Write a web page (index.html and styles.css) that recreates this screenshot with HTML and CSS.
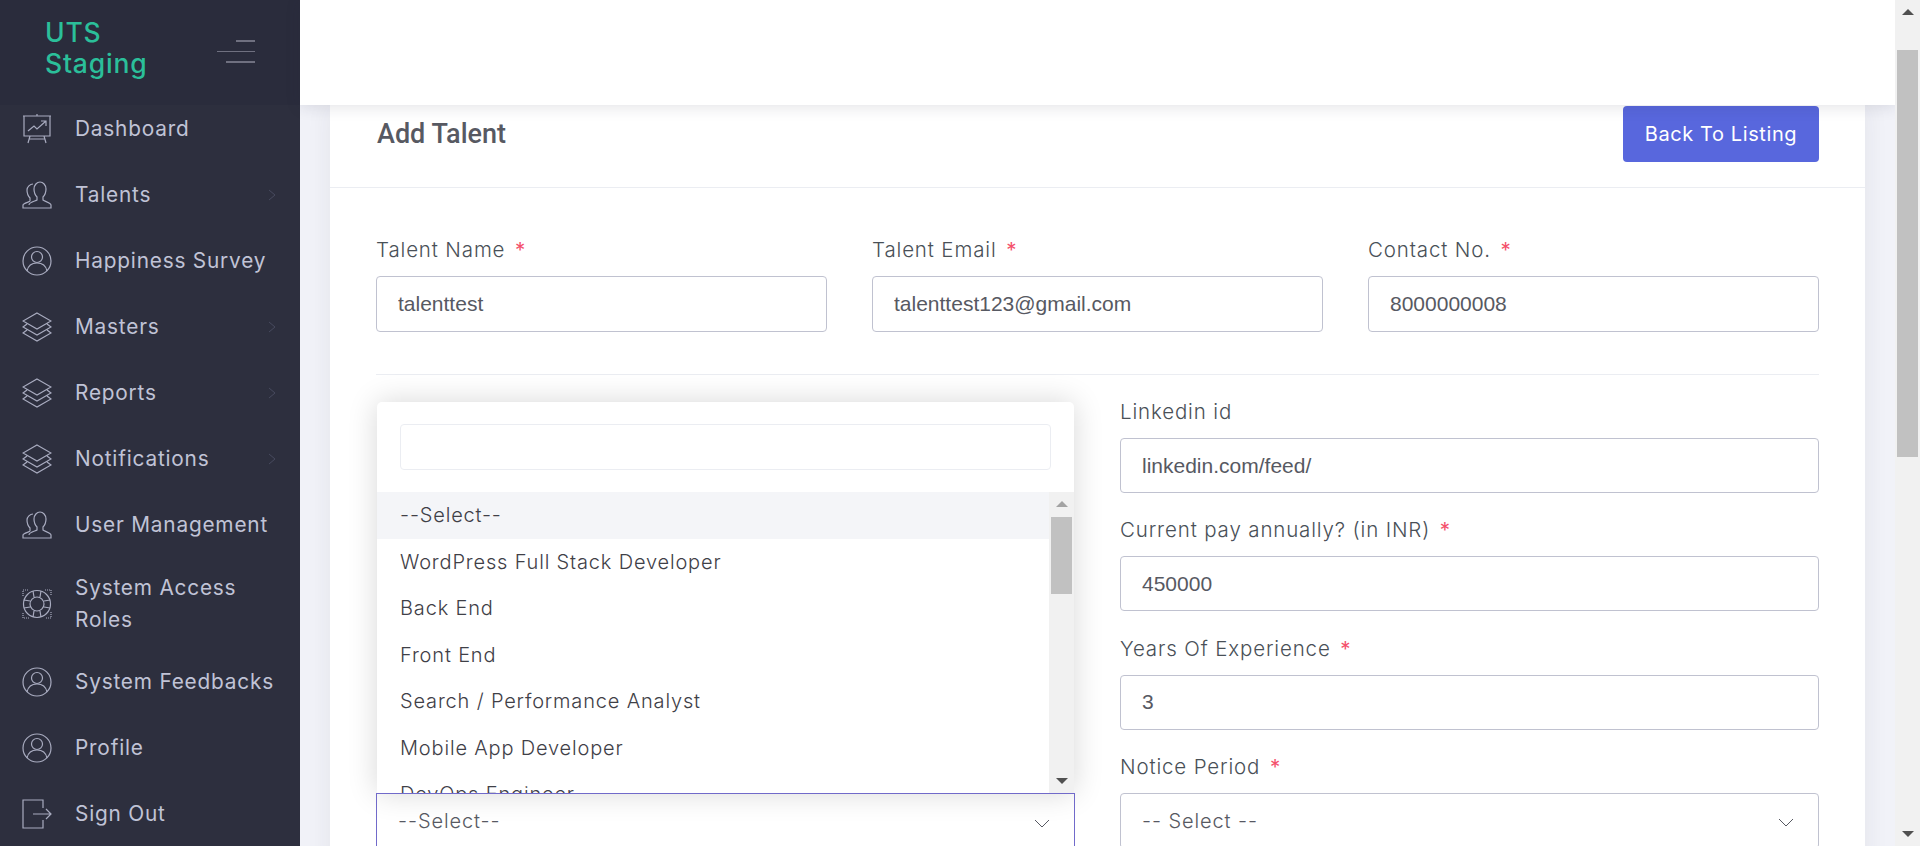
FILE: index.html
```html
<!DOCTYPE html>
<html>
  <head>
    <title>Add Talent</title>
    <link rel="stylesheet" href="styles.css">
  </head>
  <body>
    <div class="app">
      <aside class="sidebar">
        <div class="brand">
          <div class="brand-name">UTS<br>Staging</div>
          <svg class="burger" width="40" height="26" viewBox="0 0 40 26"><path d="M20 2h19M10 23h29" stroke="#6f7080" stroke-width="2" fill="none"/><path d="M1 12.500h38" stroke="#6f7080" stroke-width="1" fill="none"/></svg>
        </div>
        <ul class="menu">
          <li class="menu-item">
            <svg class="mi" viewBox="0 0 30 30"><path d="M1 2h28M2 2v20h26V2M15 2V0M8 22l-2 7M22 22l2 7M7 25h16M6 17l6-5 3 3 9-8M19 7h5v5"/></svg>
            <span>Dashboard</span>
          </li>
          <li class="menu-item">
            <svg class="mi" viewBox="0 0 30 30"><path d="M1 28h28v-3c0-2-7-4-8-5v-3c2-2 3-4 3-8 0-4-3-7-6-7s-6 3-6 7c0 4 1 6 3 8v3c-1 1-8 2-8 5M4 28h-3v-3c0-2 7-3 7-4v-3c-2-2-3-4-3-8 0-3 3-6 6-6"/></svg>
            <span>Talents</span>
            <svg class="caret" width="8" height="12" viewBox="0 0 8 12"><path d="M1 1l6 5-6 5"/></svg>
          </li>
          <li class="menu-item">
            <svg class="mi" viewBox="0 0 30 30"><circle cx="15" cy="15" r="14"/><circle cx="15" cy="11" r="5.500"/><path d="M5 25c1-5 5-8 10-8s9 3 10 8"/></svg>
            <span>Happiness Survey</span>
          </li>
          <li class="menu-item">
            <svg class="mi" viewBox="0 0 30 30"><path d="M15 1l14 8-14 8L1 9zM5 12l-4 3 14 8 14-8-4-3M5 18l-4 3 14 8 14-8-4-3"/></svg>
            <span>Masters</span>
            <svg class="caret" width="8" height="12" viewBox="0 0 8 12"><path d="M1 1l6 5-6 5"/></svg>
          </li>
          <li class="menu-item">
            <svg class="mi" viewBox="0 0 30 30"><path d="M15 1l14 8-14 8L1 9zM5 12l-4 3 14 8 14-8-4-3M5 18l-4 3 14 8 14-8-4-3"/></svg>
            <span>Reports</span>
            <svg class="caret" width="8" height="12" viewBox="0 0 8 12"><path d="M1 1l6 5-6 5"/></svg>
          </li>
          <li class="menu-item">
            <svg class="mi" viewBox="0 0 30 30"><path d="M15 1l14 8-14 8L1 9zM5 12l-4 3 14 8 14-8-4-3M5 18l-4 3 14 8 14-8-4-3"/></svg>
            <span>Notifications</span>
            <svg class="caret" width="8" height="12" viewBox="0 0 8 12"><path d="M1 1l6 5-6 5"/></svg>
          </li>
          <li class="menu-item">
            <svg class="mi" viewBox="0 0 30 30"><path d="M1 28h28v-3c0-2-7-4-8-5v-3c2-2 3-4 3-8 0-4-3-7-6-7s-6 3-6 7c0 4 1 6 3 8v3c-1 1-8 2-8 5M4 28h-3v-3c0-2 7-3 7-4v-3c-2-2-3-4-3-8 0-3 3-6 6-6"/></svg>
            <span>User Management</span>
          </li>
          <li class="menu-item two-line">
            <svg class="mi" viewBox="0 0 30 30"><circle cx="15" cy="15" r="13.500"/><circle cx="15" cy="15" r="7"/><path d="M11 2l1 6M19 2l-1 6M11 28l1-6M19 28l-1-6M2 11l6 1M2 19l6-1M28 11l-6 1M28 19l-6-1"/><path class="corners" d="M1 7V1h6M23 1h6v6M29 23v6h-6M7 29H1v-6"/></svg>
            <span>System Access Roles</span>
          </li>
          <li class="menu-item">
            <svg class="mi" viewBox="0 0 30 30"><circle cx="15" cy="15" r="14"/><circle cx="15" cy="11" r="5.500"/><path d="M5 25c1-5 5-8 10-8s9 3 10 8"/></svg>
            <span>System Feedbacks</span>
          </li>
          <li class="menu-item">
            <svg class="mi" viewBox="0 0 30 30"><circle cx="15" cy="15" r="14"/><circle cx="15" cy="11" r="5.500"/><path d="M5 25c1-5 5-8 10-8s9 3 10 8"/></svg>
            <span>Profile</span>
          </li>
          <li class="menu-item">
            <svg class="mi" viewBox="0 0 30 30"><path d="M21 9V1H1v28h20v-8M11 15h18M24 10l5 5-5 5"/></svg>
            <span>Sign Out</span>
          </li>
        </ul>
      </aside>

      <div class="content">
        <header class="topbar"></header>
        <main class="main">
          <section class="card">
            <div class="card-head">
              <h1>Add Talent</h1>
              <a class="btn" href="#">Back To Listing</a>
            </div>
            <div class="card-body">
              <div class="row-3">
                <div class="field">
                  <label>Talent Name <b>*</b></label>
                  <input class="input" type="text" value="talenttest">
                </div>
                <div class="field">
                  <label>Talent Email <b>*</b></label>
                  <input class="input" type="text" value="talenttest123@gmail.com">
                </div>
                <div class="field">
                  <label>Contact No. <b>*</b></label>
                  <input class="input" type="text" value="8000000008">
                </div>
              </div>
              <hr class="divider">
              <div class="row-2">
                <div class="left-col">
                  <div class="dropdown">
                    <div class="dd-search"><input type="text"></div>
                    <div class="dd-list">
                      <ul class="dd-options">
                        <li class="active">--Select--</li>
                        <li>WordPress Full Stack Developer</li>
                        <li>Back End</li>
                        <li>Front End</li>
                        <li>Search / Performance Analyst</li>
                        <li>Mobile App Developer</li>
                        <li>DevOps Engineer</li>
                      </ul>
                      <div class="dd-scroll">
                        <span class="arrow-up"></span>
                        <span class="dd-thumb"></span>
                        <span class="arrow-down"></span>
                      </div>
                    </div>
                  </div>
                  <div class="select open">
                    --Select--
                    <svg width="16" height="10" viewBox="0 0 16 10"><path d="M1 1l7 7 7-7"/></svg>
                  </div>
                </div>
                <div class="right-col">
                  <div class="field">
                    <label>Linkedin id</label>
                    <input class="input" type="text" value="linkedin.com/feed/">
                  </div>
                  <div class="field">
                    <label>Current pay annually? (in INR) <b>*</b></label>
                    <input class="input" type="text" value="450000">
                  </div>
                  <div class="field">
                    <label>Years Of Experience <b>*</b></label>
                    <input class="input" type="text" value="3">
                  </div>
                  <div class="field">
                    <label>Notice Period <b>*</b></label>
                    <div class="select">
                      -- Select --
                      <svg width="16" height="10" viewBox="0 0 16 10"><path d="M1 1l7 7 7-7"/></svg>
                    </div>
                  </div>
                </div>
              </div>
            </div>
          </section>
        </main>
      </div>

      <div class="page-scroll">
        <span class="arrow-up"></span>
        <span class="page-thumb"></span>
        <span class="arrow-down"></span>
      </div>
    </div>
  </body>
</html>
```

FILE: styles.css
```css
/* base */
html, body {
    height: 100%;
}

body {
    margin: 0;
    overflow: hidden;
    font-family: "Inter", "Liberation Sans", sans-serif;
    color: #495057;
    background-color: #f1f2f8;
}

.app {
    display: flex;
    height: 846px;
    overflow: hidden;
}

/* sidebar */
.sidebar {
    width: 300px;
    flex: none;
    background-color: #2d2f3e;
    overflow: hidden;
}

.brand {
    height: 105px;
    box-sizing: border-box;
    padding: 0 44px 0 45px;
    display: flex;
    align-items: center;
    justify-content: space-between;
    background-color: #2a2c3c;
}

.brand-name {
    color: #2bbf9a;
    font-size: 26.500px;
    line-height: 31px;
    font-weight: 500;
    letter-spacing: 0.8px;
    margin-top: -10px;
}

.burger {
    margin-top: -1px;
}

.menu {
    list-style: none;
    margin: -9px 0 0;
    padding: 0;
}

.menu-item {
    display: flex;
    align-items: center;
    min-height: 66px;
    box-sizing: border-box;
    padding: 13px 20px 13px 22px;
    color: #c0c3d6;
    font-size: 20.800px;
    line-height: 32px;
    letter-spacing: 0.8px;
    position: relative;
}

.menu-item.two-line {
    min-height: 91px;
}

.menu-item span {
    flex: 1;
}

.mi {
    width: 30px;
    height: 30px;
    flex: none;
    margin-right: 23px;
    fill: none;
    stroke: #a9acc0;
    stroke-width: 1.200;
}

.mi .corners {
    stroke-dasharray: 1 1;
}

.caret {
    position: absolute;
    right: 24px;
    top: 27px;
    fill: none;
    stroke: #474a5e;
}

/* top area */
.content {
    flex: 1;
    min-width: 0;
    display: flex;
    flex-direction: column;
}

.topbar {
    height: 105px;
    flex: none;
    background-color: #fff;
    box-shadow: 0 2px 14px rgba(40, 42, 60, 0.13);
    position: relative;
    z-index: 2;
}

.main {
    flex: 1;
    padding: 0 30px;
}

.card {
    background-color: #fff;
    box-shadow: 0 0 24px rgba(40, 42, 60, 0.07);
}

.card-head {
    height: 83px;
    box-sizing: border-box;
    padding: 1px 46px 0;
    display: flex;
    align-items: flex-start;
    justify-content: space-between;
    border-bottom: 1px solid #ebedf2;
}

.card-head h1 {
    margin: 13px 0 0;
    padding-left: 1px;
    font-size: 27px;
    line-height: 30px;
    font-weight: 500;
    font-family: "Roboto", sans-serif;
    color: #575962;
}

.btn {
    width: 196px;
    height: 56px;
    display: flex;
    align-items: center;
    justify-content: center;
    background-color: #5867dd;
    border-radius: 4px;
    color: #fff;
    font-size: 20px;
    letter-spacing: 0.6px;
    text-decoration: none;
}

.card-body {
    padding: 48px 46px 0;
}

.row-3 {
    display: grid;
    grid-template-columns: repeat(3, 1fr);
    gap: 45px;
}

.field label {
    display: block;
    font-size: 20.500px;
    line-height: 28px;
    font-weight: 300;
    letter-spacing: 0.85px;
    color: #495057;
    margin-bottom: 12px;
}

.field label b {
    color: #f4516c;
    font-weight: 400;
    margin-left: 3px;
}

.input {
    display: block;
    width: 100%;
    height: 56px;
    box-sizing: border-box;
    padding: 0 21px;
    border: 1px solid #c0c2d0;
    border-radius: 4px;
    background-color: #fff;
    color: #575962;
    font-family: "Liberation Sans", sans-serif;
    font-size: 21px;
    outline: none;
}

.divider {
    border: 0;
    border-top: 1px solid #ebedf2;
    margin: 42px 0 27px;
}

.row-2 {
    display: grid;
    grid-template-columns: 699px 699px;
    gap: 45px;
}

.right-col {
    margin-top: -4px;
}

.right-col .input {
    height: 55px;
}

.right-col .field {
    margin-bottom: 23.300px;
}

/* dropdown */
.dropdown {
    height: 391px;
    margin: 0 1px;
    background-color: #fff;
    border-radius: 5px 5px 0 0;
    box-shadow: 0 0 30px rgba(0, 0, 0, 0.16);
    overflow: hidden;
    display: flex;
    flex-direction: column;
}

.dd-search {
    padding: 22px 23px 22px 23px;
}

.dd-search input {
    display: block;
    width: 100%;
    height: 46px;
    box-sizing: border-box;
    border: 1px solid #ebedf2;
    border-radius: 4px;
    outline: none;
}

.dd-list {
    display: flex;
    flex: 1;
    min-height: 0;
}

.dd-options {
    list-style: none;
    margin: 0;
    padding: 0;
    flex: 1;
    overflow: hidden;
}

.dd-options li {
    height: 46.500px;
    line-height: 46.500px;
    padding-left: 23px;
    font-size: 20px;
    font-weight: 300;
    letter-spacing: 0.83px;
    color: #3f4047;
}

.dd-options li.active {
    background-color: #f4f5f8;
}

.dd-scroll {
    width: 25px;
    flex: none;
    background-color: #f1f1f1;
    position: relative;
}

.dd-thumb {
    position: absolute;
    left: 2px;
    right: 2px;
    top: 25px;
    height: 77px;
    background-color: #c1c1c1;
}

.arrow-up,
.arrow-down {
    position: absolute;
    left: 50%;
    margin-left: -6px;
    width: 0;
    height: 0;
    border-left: 6px solid transparent;
    border-right: 6px solid transparent;
}

.arrow-up {
    top: 9px;
    border-bottom: 6px solid #a3a3a3;
}

.arrow-down {
    bottom: 9px;
    border-top: 6px solid #505050;
}

.select {
    height: 56px;
    box-sizing: border-box;
    padding: 0 21px;
    display: flex;
    align-items: center;
    justify-content: space-between;
    border: 1px solid #c0c2d0;
    border-radius: 4px;
    font-size: 20px;
    font-weight: 300;
    letter-spacing: 0.9px;
    color: #575962;
}

.select.open {
    border-color: #716aca;
    border-radius: 0;
    width: 699px;
}

.select svg {
    fill: none;
    stroke: #575962;
    margin: 5px 3px 0 0;
}

/* page scrollbar */
.page-scroll {
    width: 25px;
    flex: none;
    background-color: #f1f1f1;
    position: relative;
    z-index: 3;
}

.page-thumb {
    position: absolute;
    left: 2px;
    right: 2px;
    top: 50px;
    height: 407px;
    background-color: #c1c1c1;
}

.page-scroll .arrow-up {
    border-bottom-color: #505050;
}
```
